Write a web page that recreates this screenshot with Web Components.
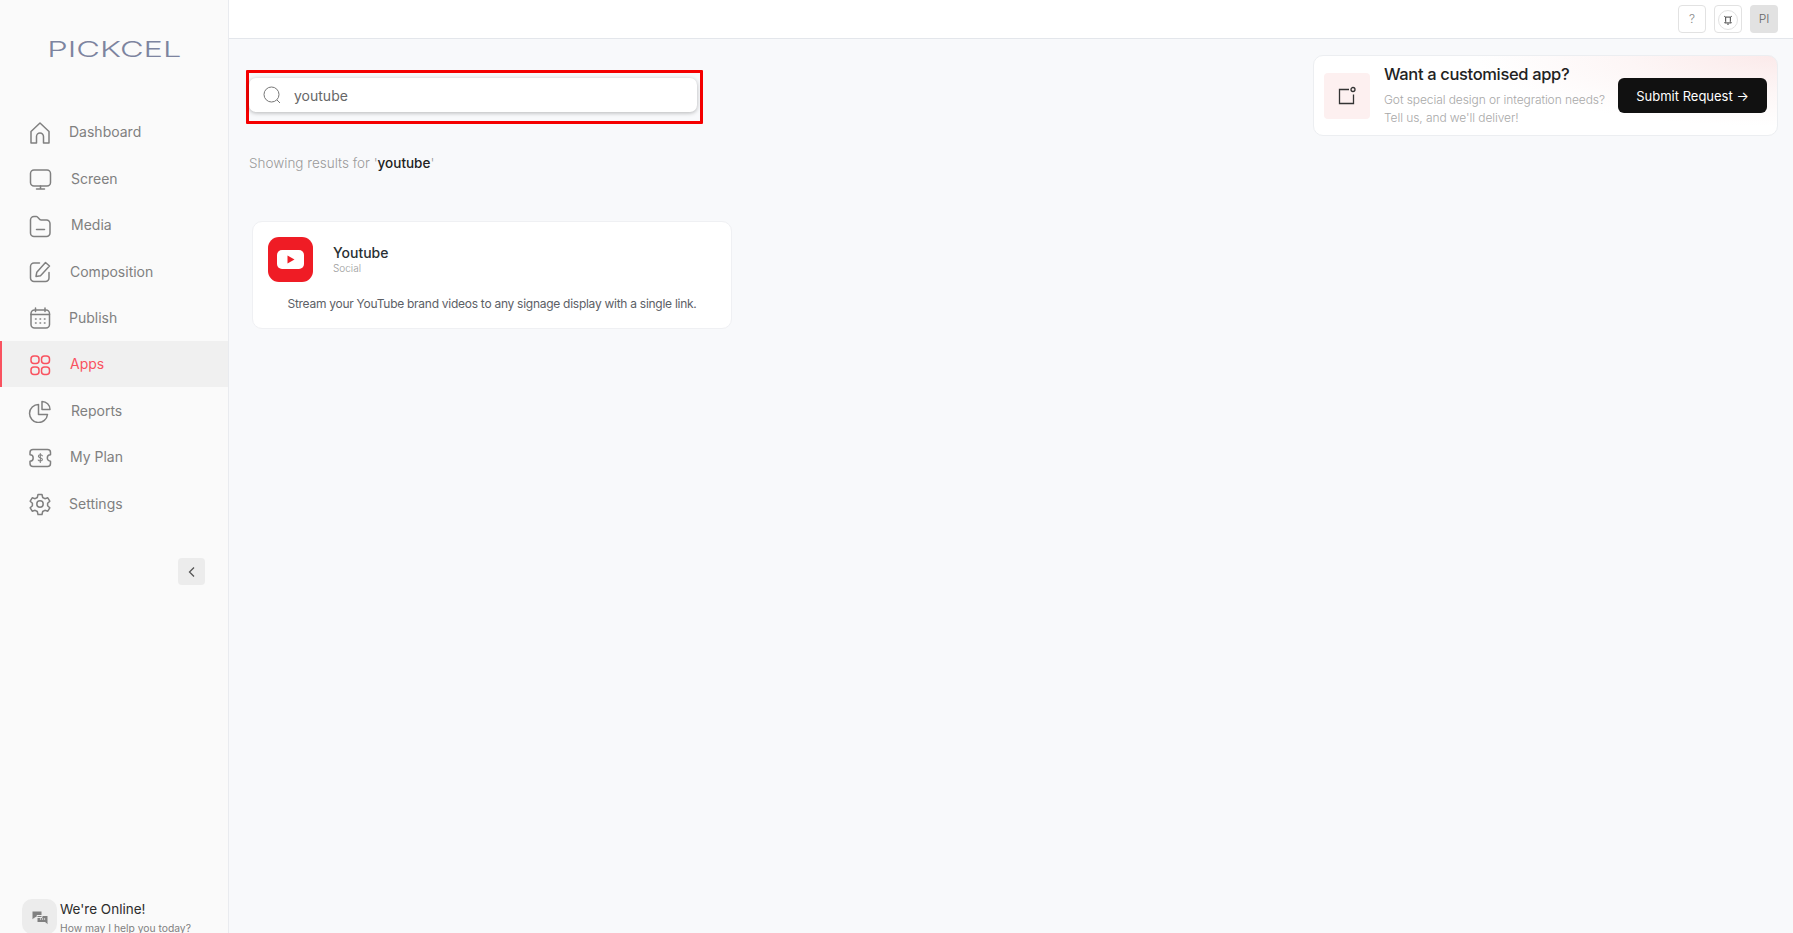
<!DOCTYPE html>
<html>
<head>
<meta charset="utf-8">
<title>Pickcel Apps</title>
<style>
    html, body { margin: 0; height: 100%; }
    body {
        font-family: 'Inter', 'Liberation Sans', sans-serif;
        background: #f8f9fb;
        overflow: hidden;
    }
</style>
</head>
<body>
<app-shell>
    <side-bar slot="side"></side-bar>
    <top-bar slot="top"></top-bar>
    <search-box slot="main"></search-box>
    <app-card slot="main"></app-card>
    <request-card slot="promo"></request-card>
</app-shell>

<script>
class AppShell extends HTMLElement {
    constructor() {
        super();
        this.attachShadow({ mode: "open" });
        this.shadowRoot.innerHTML = `
<style>
    :host { display: grid; grid-template-columns: 229px 1fr; height: 933px; }
    #right { display: flex; flex-direction: column; min-width: 0; }
    #content { display: flex; justify-content: space-between; align-items: flex-start; padding: 16px 15px 0 17px; }
    #left { display: flex; flex-direction: column; }
</style>
<slot name="side"></slot>
<div id="right">
    <slot name="top"></slot>
    <div id="content">
        <div id="left"><slot name="main"></slot></div>
        <slot name="promo"></slot>
    </div>
</div>`;
    }
}

const NAV_ITEMS = [
    ["Dashboard", 69, '<path d="M3 22v-11.500L12 2l9 8.500V22h-5.500v-6.500a3.500 3.500 0 0 0-7 0V22z"/>'],
    ["Screen", 71, '<rect x="2.500" y="3" width="20" height="16" rx="3.500"/><path d="M12.500 19v2.500M8.500 22h8"/>'],
    ["Media", 71, '<path d="M2.500 6a3.500 3.500 0 0 1 3.500-3.500h2.500c1.500 0 2.500 3.500 4.500 3.500h5.500a3.500 3.500 0 0 1 3.500 3.500v9.500a3.500 3.500 0 0 1-3.500 3.500H6a3.500 3.500 0 0 1-3.500-3.500z"/><path d="M8.500 15.500h8"/>'],
    ["Composition", 70, '<path d="M11.500 3H6A3.500 3.500 0 0 0 2.500 6.500V18A3.500 3.500 0 0 0 6 21.500h11.500A3.500 3.500 0 0 0 21 18v-5.500"/><path d="M8 16.500l.8-4.300L17.500 2.500l4 3.500-9 9.800z"/>'],
    ["Publish", 69, '<rect x="3" y="4" width="18.500" height="18" rx="3.500"/><path d="M3 8.500h18.500M7.500 2v3.500M17 2v3.500"/><path d="M7.500 13h.6M12 13h.6M16.400 13h.6M7.500 17h.6M12 17h.6M16.400 17h.6"/>'],
    ["Apps", 70, '<rect x="3" y="3" width="8" height="7.500" rx="3"/><rect x="13.500" y="3" width="8" height="7.500" rx="3"/><rect x="3" y="14" width="8" height="7.500" rx="3"/><rect x="13.500" y="14" width="8" height="7.500" rx="3"/>', true],
    ["Reports", 71, '<path d="M10.500 5.500a9 9 0 1 0 9 10h-9z"/><path d="M14 2.500a8 8 0 0 1 8 8h-8z"/>'],
    ["My Plan", 70, '<path d="M5 3.500h14.500a3 3 0 0 1 3 3v2.300a3 3 0 0 0 0 6.400v2.300a3 3 0 0 1-3 3H5a3 3 0 0 1-3-3v-2.300a3 3 0 0 0 0-6.400V6.500a3 3 0 0 1 3-3z"/><path d="M14.300 9.800c-.4-.7-1.100-1-2-1-1.100 0-1.900.5-1.900 1.400 0 2 4 1.100 4 3.300 0 .9-.9 1.500-2.100 1.500-.9 0-1.700-.3-2.100-1M12.300 7.500v9" stroke-width="1.100"/>'],
    ["Settings", 69, '<circle cx="12" cy="12" r="3.200"/><path d="M10 2.500h4l.7 3 2.200 1.200 2.900-.9 2 3.400-2.200 2.100v2.400l2.200 2.100-2 3.400-2.900-.9-2.200 1.200-.7 3h-4l-.7-3-2.200-1.200-2.900.9-2-3.400 2.200-2.100v-2.400L2.200 9.200l2-3.400 2.900.9 2.200-1.200z"/>']
];

class NavItem extends HTMLElement {
    constructor() {
        super();
        this.attachShadow({ mode: "open" });
    }

    connectedCallback() {
        var active = this.hasAttribute("active");
        var color = active ? "#f9525f" : "#808080";
        this.shadowRoot.innerHTML = `
<style>
    :host { display: block; }
    #row {
        height: 46.440px;
        box-sizing: border-box;
        display: flex;
        align-items: center;
        padding-left: ${active ? 26 : 28}px;
        color: ${color};
        background: ${active ? "#f0f0f0" : "transparent"};
        border-left: ${active ? "2px solid #f9525f" : "0"};
    }
    svg { width: 24px; height: 24px; margin-top: 2px; flex: none; fill: none; stroke: currentColor; stroke-width: 1.500; stroke-linecap: round; stroke-linejoin: round; }
    span { font-size: 14px; font-weight: 400; margin-left: ${this.getAttribute("gap")}px; }
</style>
<div id="row">
    <svg viewBox="0 0 24 24">${this.getAttribute("icon")}</svg>
    <span><slot></slot></span>
</div>`;
    }
}

class SideBar extends HTMLElement {
    constructor() {
        super();
        this.attachShadow({ mode: "open" });
        this.shadowRoot.innerHTML = `
<style>
    :host { display: flex; flex-direction: column; background: #fafafa; border-right: 1px solid #e9ebef; height: 933px; overflow: hidden; }
    #logo { height: 108.500px; padding-top: 35px; box-sizing: border-box; text-align: center; }
    #logo span {
        display: inline-block;
        font-size: 22px;
        line-height: 29px;
        font-weight: 300;
        color: #7d849f;
        transform: scaleX(1.480);
    }
    #collapse-row { display: flex; justify-content: flex-end; padding: 32px 23px 0 0; }
    #collapse { width: 27px; height: 27px; background: #ececec; border-radius: 4px; display: flex; align-items: center; justify-content: center; }
    #collapse svg { width: 12px; height: 12px; fill: none; stroke: #555; stroke-width: 1.300; }
    #chat { margin-top: auto; display: flex; gap: 3px; padding: 0 0 0 22px; height: 34px; }
    #chat-icon { width: 35px; height: 35px; flex: none; border-radius: 10px; background: #ececec; display: flex; align-items: center; justify-content: center; }
    #chat-icon svg { width: 18px; height: 18px; fill: #808080; }
    #chat b { display: block; font-size: 13.500px; line-height: 18px; font-weight: 400; color: #2c2c2c; margin-top: 1px; }
    #chat small { display: block; font-size: 10.300px; line-height: 16px; color: #808080; white-space: nowrap; margin-top: 2px; }
</style>
<div id="logo"><span>PICKCEL</span></div>
<nav id="nav"></nav>
<div id="collapse-row">
    <div id="collapse"><svg viewBox="0 0 12 12"><path d="M8 1.500L3.500 6 8 10.500"/></svg></div>
</div>
<div id="chat">
    <div id="chat-icon"><svg viewBox="0 0 18 18"><path d="M1 3h10v6.500H4.500L1 12zM6 7.500h11V17l-3-2.500H6z" stroke="#ececec" stroke-width="1"/><circle cx="9.500" cy="11" r=".7" fill="#ececec"/><circle cx="11.500" cy="11" r=".7" fill="#ececec"/><circle cx="13.500" cy="11" r=".7" fill="#ececec"/></svg></div>
    <div><b>We're Online!</b><small>How may I help you today?</small></div>
</div>`;

        var nav = this.shadowRoot.querySelector("#nav");
        NAV_ITEMS.forEach(item => {
            var el = document.createElement("nav-item");
            el.textContent = item[0];
            el.setAttribute("gap", item[1] - 28 - 24);
            el.setAttribute("icon", item[2]);
            if (item[3]) el.setAttribute("active", "");
            nav.appendChild(el);
        });
    }
}

class TopBar extends HTMLElement {
    constructor() {
        super();
        this.attachShadow({ mode: "open" });
        this.shadowRoot.innerHTML = `
<style>
    :host { display: flex; justify-content: flex-end; align-items: center; gap: 8px; height: 39px; box-sizing: border-box; background: #fff; border-bottom: 1px solid #e3e6eb; padding: 0 15px 1px 0; }
    .btn { width: 28px; height: 28px; box-sizing: border-box; border: 1px solid #e2e2e2; border-radius: 4px; display: flex; align-items: center; justify-content: center; font-size: 12px; font-weight: 300; color: #888; }
    .ring { width: 20px; height: 20px; margin-top: 2px; box-sizing: border-box; border: 1px solid #e2e2e2; border-radius: 50%; display: flex; align-items: center; justify-content: center; }
    svg { width: 10px; height: 10px; fill: none; stroke: #444; stroke-width: 1.200; }
    #avatar { background: #e2e2e2; border: 0; color: #666; }
</style>
<div class="btn">?</div>
<div class="btn"><div class="ring"><svg viewBox="0 0 12 12"><path d="M3.200 2.500h5.600v5.500l1.200 1.500H2L3.200 8zM1.500 1.500l1.700 1M10.500 1.500l-1.700 1M5 11h2"/></svg></div></div>
<div class="btn" id="avatar">PI</div>`;
    }
}

class SearchBox extends HTMLElement {
    constructor() {
        super();
        this.attachShadow({ mode: "open" });
        this.shadowRoot.innerHTML = `
<style>
    :host { display: block; }
    #outline { width: 457px; height: 54px; box-sizing: border-box; border: 3px solid #f50000; border-radius: 1px; margin-top: 15px; padding: 5px 0 0; }
    #box {
        width: 448px; height: 34px; box-sizing: border-box;
        display: flex; align-items: center;
        background: #fff; border-radius: 7px;
        box-shadow: 0 1px 4px rgba(0,0,0,.28);
        padding-left: 14px;
    }
    svg { width: 18px; height: 18px; fill: none; stroke: #777; stroke-width: 1; flex: none; }
    #value { position: relative; top: .5px; margin-left: 13px; font-size: 14px; color: #666; font-weight: 400; }
    #results { margin: 30px 0 0 3px; font-size: 13.500px; line-height: 18px; font-weight: 300; color: #9a9a9a; }
    b { font-weight: 500; color: #222; }
</style>
<div id="outline">
    <div id="box">
        <svg viewBox="0 0 18 18"><circle cx="8.500" cy="8.500" r="7.500"/><path d="M14 14l3 3"/></svg>
        <span id="value">youtube</span>
    </div>
</div>
<div id="results">Showing results for '<b>youtube</b>'</div>`;
    }
}

class AppCard extends HTMLElement {
    constructor() {
        super();
        this.attachShadow({ mode: "open" });
        this.shadowRoot.innerHTML = `
<style>
    :host { display: block; width: 480px; height: 108px; box-sizing: border-box; margin: 49px 0 0 6px; background: #fff; border: 1px solid #eff0f3; border-radius: 10px; padding: 15px 15px 0; }
    #head { display: flex; align-items: center; gap: 20px; }
    #logo { width: 45px; height: 45px; border-radius: 11px; background: #ef1c25; display: flex; align-items: center; justify-content: center; flex: none; }
    svg { width: 27px; height: 19px; }
    h3 { margin: -2px 0 0; font-size: 14px; line-height: 18px; font-weight: 500; color: #2a3033; }
    small { display: block; font-size: 10px; line-height: 12px; font-weight: 300; color: #9a9a9a; }
    p { margin: 13px 0 0; text-align: center; font-size: 12px; letter-spacing: -0.270px; line-height: 18px; color: #5c6066; white-space: nowrap; }
</style>
<div id="head">
    <div id="logo"><svg viewBox="0 0 27 19"><rect width="27" height="19" rx="5" fill="#fff"/><path d="M10.500 5.500l7 4-7 4z" fill="#ef1c25"/></svg></div>
    <div><h3>Youtube</h3><small>Social</small></div>
</div>
<p>Stream your YouTube brand videos to any signage display with a single link.</p>`;
    }
}

class RequestCard extends HTMLElement {
    constructor() {
        super();
        this.attachShadow({ mode: "open" });
        this.shadowRoot.innerHTML = `
<style>
    :host {
        display: flex; align-items: center;
        width: 465px; height: 81px; box-sizing: border-box;
        padding: 0 10px;
        border: 1px solid #eceef1; border-radius: 10px;
        background: radial-gradient(ellipse 300px 70px at 100% 0%, #fbeaea 0%, #fdf6f6 50%, #fff 100%), #fff;
    }
    #icon { width: 46px; height: 46px; flex: none; background: #fdf0f0; border-radius: 4px; display: flex; align-items: center; justify-content: center; }
    svg { width: 20px; height: 20px; fill: none; stroke: #333; stroke-width: 1.300; }
    #text { margin-left: 14px; flex: 1; min-width: 0; }
    h3 { margin: -1px 0 0; font-size: 16.500px; letter-spacing: -0.350px; line-height: 20px; font-weight: 450; color: #222; white-space: nowrap; }
    p { margin: 7px 0 0; font-size: 12px; letter-spacing: -0.080px; line-height: 18px; font-weight: 300; color: #a8a8a8; white-space: nowrap; }
    #btn { width: 149px; height: 35px; flex: none; background: #111; color: #fff; border-radius: 6px; display: flex; align-items: center; justify-content: center; font-size: 13px; font-weight: 400; white-space: nowrap; }
</style>
<div id="icon"><svg viewBox="0 0 20 20"><path d="M12 3.500H2.500v14h14V8.500"/><circle cx="16" cy="3.500" r="2"/></svg></div>
<div id="text">
    <h3>Want a customised app?</h3>
    <p>Got special design or integration needs?<br>Tell us, and we'll deliver!</p>
</div>
<div id="btn">Submit Request →</div>`;
    }
}

customElements.define("nav-item", NavItem);
customElements.define("side-bar", SideBar);
customElements.define("top-bar", TopBar);
customElements.define("search-box", SearchBox);
customElements.define("app-card", AppCard);
customElements.define("request-card", RequestCard);
customElements.define("app-shell", AppShell);
</script>
</body>
</html>
